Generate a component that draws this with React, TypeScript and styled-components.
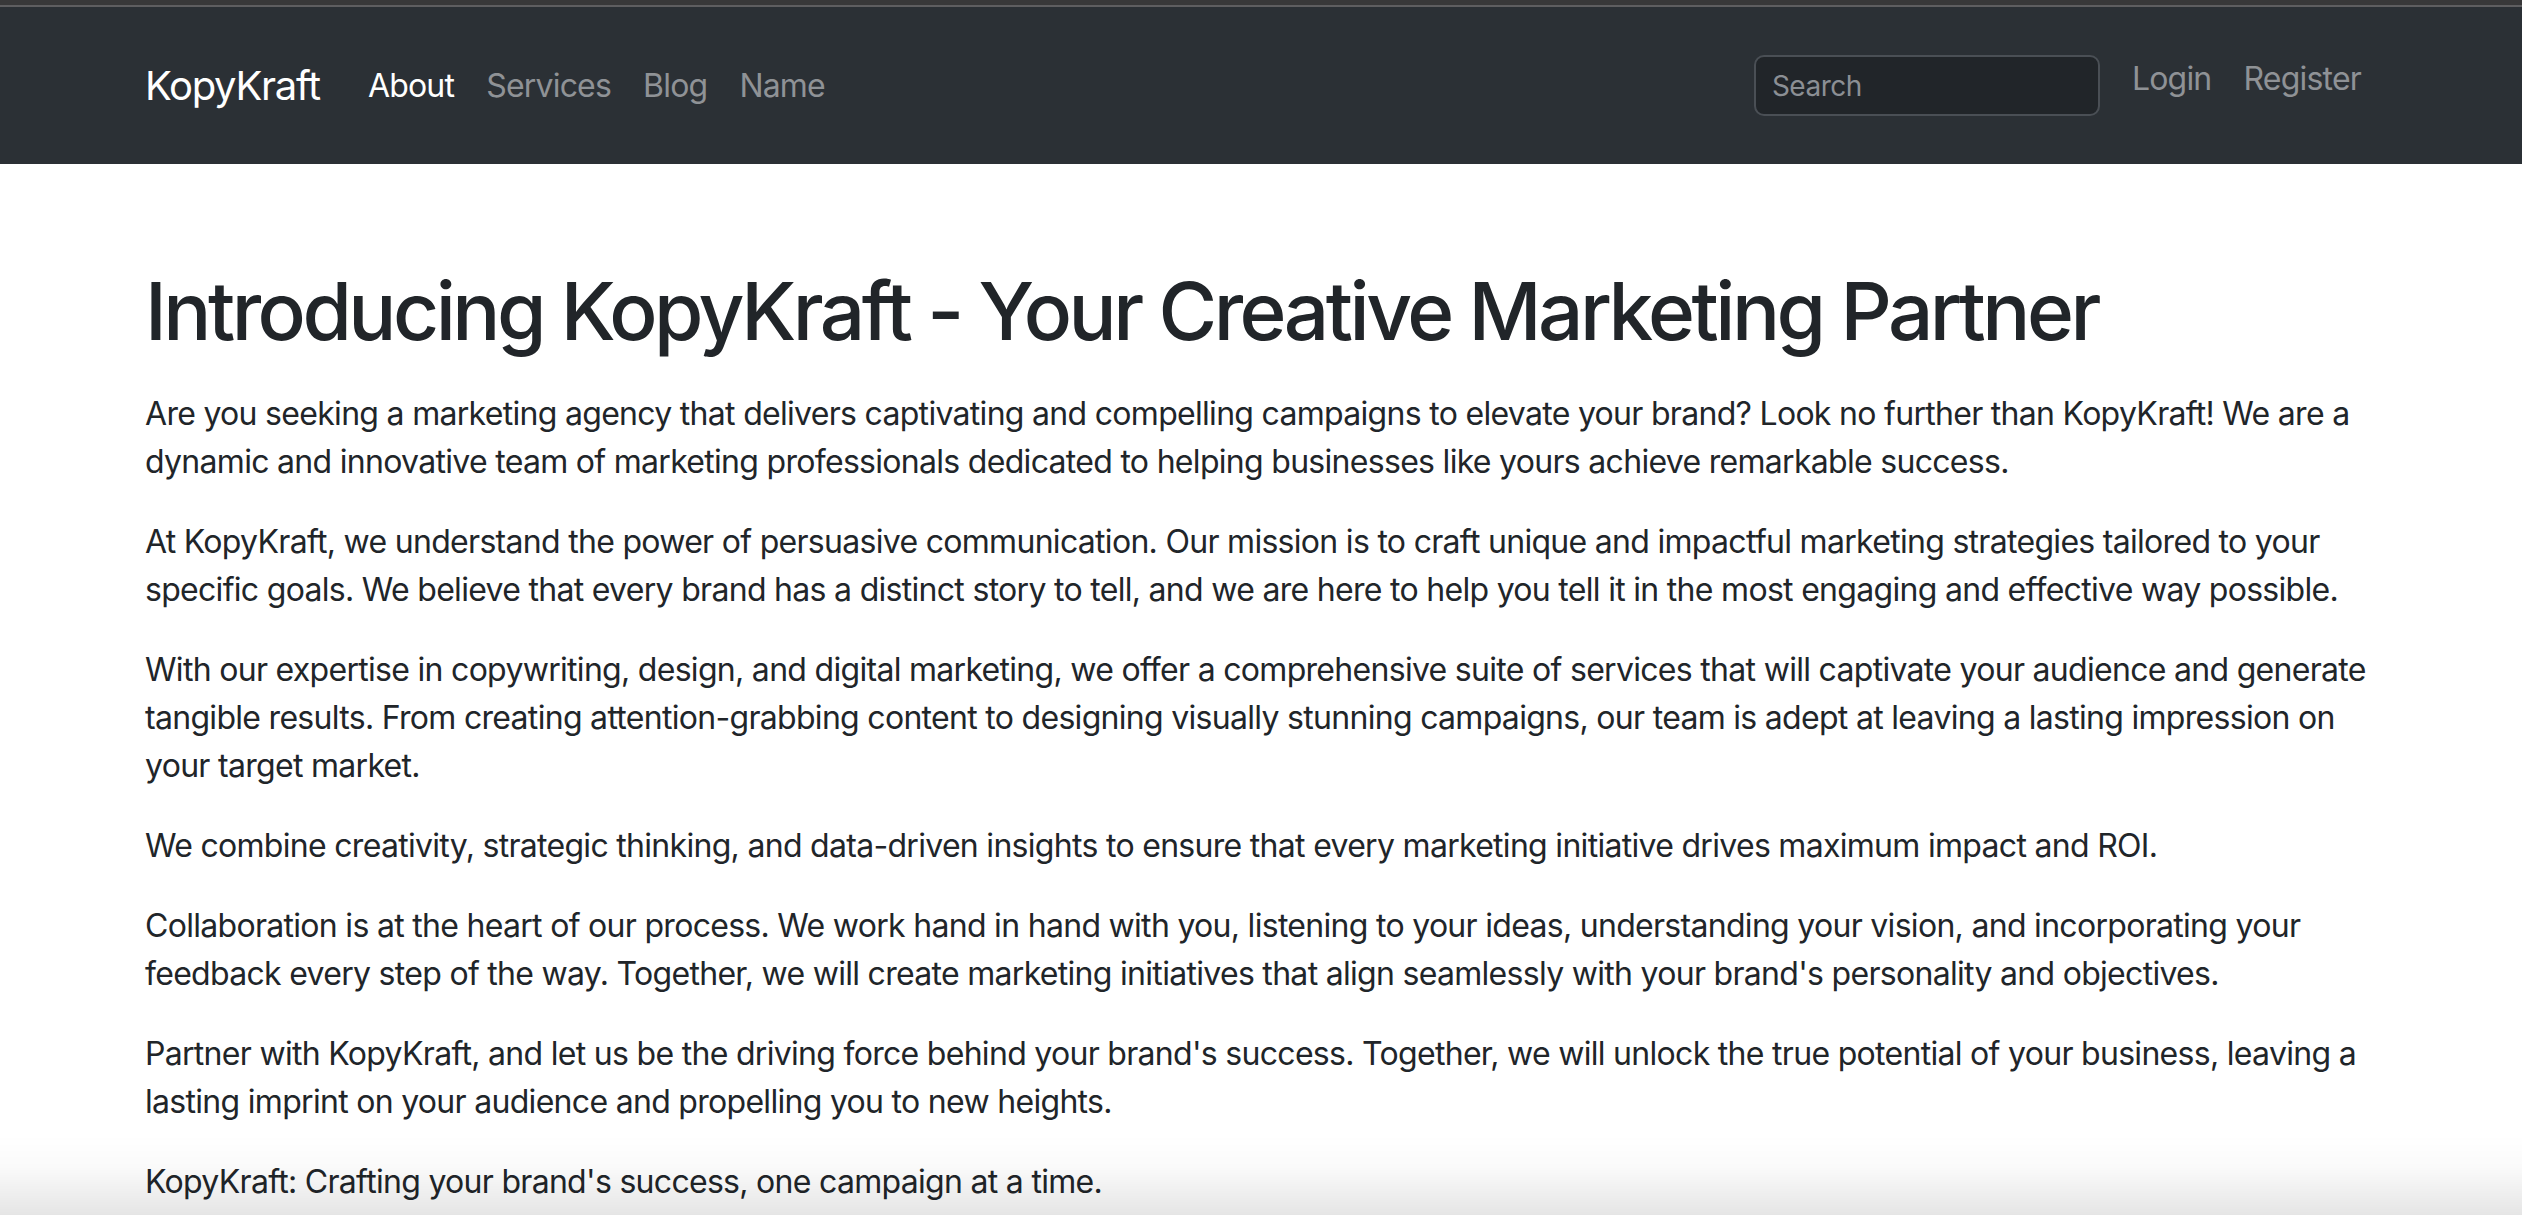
import React from "react";
import styled, { createGlobalStyle } from "styled-components";

const GlobalStyle = createGlobalStyle`
  html, body {
    margin: 0;
    padding: 0;
    background: #ffffff;
  }
  body {
    font-family: Inter, "Noto Sans", "Liberation Sans", sans-serif;
    color: #212529;
  }
  * { box-sizing: border-box; }
`;

const Page = styled.div`
  min-height: 1215px;
  display: flex;
  flex-direction: column;
  background: #ffffff;
`;

const TopStrip = styled.div`
  height: 7px;
  background: #383839;
  border-bottom: 2px solid #5e5e60;
`;

const NavBar = styled.nav`
  height: 157px;
  background: #2b3035;
  display: flex;
  align-items: center;
`;

const Container = styled.div`
  width: 2232px;
  margin: 0 auto;
  display: flex;
  align-items: center;
`;

const Brand = styled.a`
  font-size: 40px;
  line-height: 60px;
  color: #ffffff;
  text-decoration: none;
  margin-right: 32px;
  letter-spacing: -1.3px;
`;

const NavList = styled.ul`
  display: flex;
  align-items: center;
  list-style: none;
  margin: 0;
  padding: 0;
  flex: 1;
`;

const NavLink = styled.a<{ $active?: boolean }>`
  display: block;
  padding: 16px 16px;
  font-size: 32px;
  line-height: 48px;
  color: ${(p) => (p.$active ? "#ffffff" : "#8f9296")};
  text-decoration: none;
  letter-spacing: -0.8px;
`;

const RightGroup = styled.div`
  display: flex;
  align-items: center;
`;

const SearchInput = styled.input`
  width: 346px;
  height: 61px;
  padding: 0 16px;
  font-family: Inter, "Noto Sans", sans-serif;
  font-size: 28px;
  letter-spacing: -0.5px;
  color: #dee2e6;
  background: #212529;
  border: 2px solid #4a4f55;
  border-radius: 10px;
  outline: none;
  margin-right: 16px;
  &::placeholder {
    color: #8b8f94;
  }
`;

const AuthList = styled.ul`
  display: flex;
  list-style: none;
  margin: 0 0 14px;
  padding: 0;
`;

const Main = styled.main`
  width: 2232px;
  margin: 0 auto;
  padding-top: 99px;
`;

const Heading = styled.h1`
  font-size: 80px;
  line-height: 96px;
  font-weight: 500;
  margin: 0 0 31px;
  letter-spacing: -3.5px;
  color: #212529;
`;

const Para = styled.p`
  font-size: 32px;
  line-height: 48px;
  margin: 0 0 32px;
  color: #212529;
  letter-spacing: -0.7px;
`;

const BottomShade = styled.div`
  position: fixed;
  left: 0;
  right: 0;
  bottom: 0;
  height: 80px;
  pointer-events: none;
  background: linear-gradient(
    to bottom,
    rgba(0, 0, 0, 0) 0%,
    rgba(0, 0, 0, 0.02) 40%,
    rgba(0, 0, 0, 0.1) 100%
  );
`;

const paragraphs = [
  "Are you seeking a marketing agency that delivers captivating and compelling campaigns to elevate your brand? Look no further than KopyKraft! We are a dynamic and innovative team of marketing professionals dedicated to helping businesses like yours achieve remarkable success.",
  "At KopyKraft, we understand the power of persuasive communication. Our mission is to craft unique and impactful marketing strategies tailored to your specific goals. We believe that every brand has a distinct story to tell, and we are here to help you tell it in the most engaging and effective way possible.",
  "With our expertise in copywriting, design, and digital marketing, we offer a comprehensive suite of services that will captivate your audience and generate tangible results. From creating attention-grabbing content to designing visually stunning campaigns, our team is adept at leaving a lasting impression on your target market.",
  "We combine creativity, strategic thinking, and data-driven insights to ensure that every marketing initiative drives maximum impact and ROI.",
  "Collaboration is at the heart of our process. We work hand in hand with you, listening to your ideas, understanding your vision, and incorporating your feedback every step of the way. Together, we will create marketing initiatives that align seamlessly with your brand's personality and objectives.",
  "Partner with KopyKraft, and let us be the driving force behind your brand's success. Together, we will unlock the true potential of your business, leaving a lasting imprint on your audience and propelling you to new heights.",
  "KopyKraft: Crafting your brand's success, one campaign at a time.",
];

export default function App() {
  return (
    <>
      <GlobalStyle />
      <Page>
        <TopStrip />
        <NavBar>
          <Container>
            <Brand href="#">KopyKraft</Brand>
            <NavList>
              <li><NavLink href="#" $active>About</NavLink></li>
              <li><NavLink href="#">Services</NavLink></li>
              <li><NavLink href="#">Blog</NavLink></li>
              <li><NavLink href="#">Name</NavLink></li>
            </NavList>
            <RightGroup>
              <SearchInput type="search" placeholder="Search" />
              <AuthList>
                <li><NavLink href="#">Login</NavLink></li>
                <li><NavLink href="#">Register</NavLink></li>
              </AuthList>
            </RightGroup>
          </Container>
        </NavBar>
        <Main>
          <Heading>Introducing KopyKraft - Your Creative Marketing Partner</Heading>
          {paragraphs.map((t, i) => (
            <Para key={i}>{t}</Para>
          ))}
        </Main>
        <BottomShade />
      </Page>
    </>
  );
}
